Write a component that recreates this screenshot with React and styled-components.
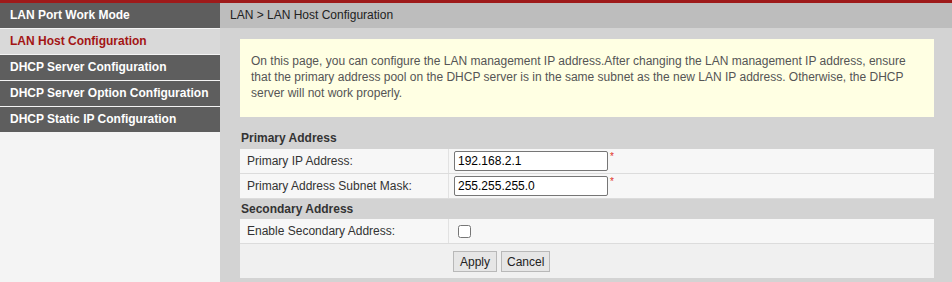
import React from "react";
import styled, { createGlobalStyle } from "styled-components";

const Global = createGlobalStyle`
  html, body { margin: 0; padding: 0; }
  body {
    font-family: "Liberation Sans", Arial, sans-serif;
    font-size: 12px;
    background: #f4f4f4;
  }
`;

const Page = styled.div`
  display: flex;
  flex-direction: column;
  width: 952px;
  height: 282px;
  overflow: hidden;
`;

const TopBar = styled.div`
  height: 3px;
  background: #9e1a1a;
`;

const Body = styled.div`
  flex: 1;
  display: grid;
  grid-template-columns: 220px 1fr;
`;

const Sidebar = styled.nav`
  background: #f4f4f4;
  display: flex;
  flex-direction: column;
`;

const NavItem = styled.div`
  height: 25px;
  line-height: 25px;
  padding-left: 10px;
  font-weight: bold;
  font-size: 12px;
  border-bottom: 1px solid #f4f4f4;
  background: ${(p) => (p.$active ? "#d9d9d9" : "#5e5e5e")};
  color: ${(p) => (p.$active ? "#a31515" : "#ffffff")};
`;

const Main = styled.main`
  background: #d3d3d3;
  display: flex;
  flex-direction: column;
`;

const Crumb = styled.div`
  height: 25px;
  line-height: 25px;
  padding-left: 10px;
  background: #bdbdbd;
  color: #222;
`;

const Content = styled.div`
  padding: 11px 18px 0 20px;
  display: flex;
  flex-direction: column;
`;

const Notice = styled.div`
  background: #ffffe3;
  color: #555;
  line-height: 16px;
  padding: 14px 10px 16px 11px;
`;

const SectionTitle = styled.div`
  font-weight: bold;
  color: #333;
  margin-top: ${(p) => p.$top || 0}px;
  height: ${(p) => p.$h || 21}px;
  line-height: ${(p) => p.$h || 21}px;
  padding-left: 1px;
`;

const Row = styled.div`
  display: grid;
  grid-template-columns: 209px 1fr;
  background: #f7f7f7;
  border-bottom: 1px solid #dcdcdc;
`;

const Label = styled.div`
  height: 24px;
  line-height: 24px;
  padding-left: 7px;
  color: #333;
  border-right: 1px solid #e2e2e2;
`;

const Value = styled.div`
  display: flex;
  align-items: center;
  padding-left: 5px;
`;

const TextInput = styled.input`
  width: 154px;
  height: 20px;
  box-sizing: border-box;
  border: 1px solid #767676;
  border-radius: 2px;
  padding: 0 3px;
  font-family: "Liberation Sans", Arial, sans-serif;
  font-size: 12px;
  color: #000;
  background: #fff;
  outline: none;
`;

const Required = styled.span`
  color: #e0301e;
  font-size: 10px;
  align-self: flex-start;
  margin-top: 2px;
  margin-left: 2px;
`;

const Check = styled.input`
  width: 13px;
  height: 13px;
  margin: 3px 3px 3px 4px;
`;

const ButtonRow = styled.div`
  display: flex;
  gap: 4px;
  background: #f0f0f0;
  height: 34px;
  box-sizing: border-box;
  padding: 7px 0 0 213px;
`;

const Button = styled.button`
  height: 21px;
  padding: 0 ${(p) => p.$pad || 6}px;
  font-family: "Liberation Sans", Arial, sans-serif;
  font-size: 12px;
  color: #222;
  background: #e6e6e6;
  border: 1px solid #b8b8b8;
  border-radius: 0;
`;

export default function App() {
  const items = [
    "LAN Port Work Mode",
    "LAN Host Configuration",
    "DHCP Server Configuration",
    "DHCP Server Option Configuration",
    "DHCP Static IP Configuration",
  ];
  return (
    <>
      <Global />
      <Page>
        <TopBar />
        <Body>
          <Sidebar>
            {items.map((t, i) => (
              <NavItem key={t} $active={i === 1}>
                {t}
              </NavItem>
            ))}
          </Sidebar>
          <Main>
            <Crumb>LAN &gt; LAN Host Configuration</Crumb>
            <Content>
              <Notice>
                On this page, you can configure the LAN management IP address.After changing the LAN
                management IP address, ensure that the primary address pool on the DHCP server is in the
                same subnet as the new LAN IP address. Otherwise, the DHCP server will not work properly.
              </Notice>
              <SectionTitle $top={10} $h={22}>Primary Address</SectionTitle>
              <Row>
                <Label>Primary IP Address:</Label>
                <Value>
                  <TextInput defaultValue="192.168.2.1" />
                  <Required>*</Required>
                </Value>
              </Row>
              <Row>
                <Label>Primary Address Subnet Mask:</Label>
                <Value>
                  <TextInput defaultValue="255.255.255.0" />
                  <Required>*</Required>
                </Value>
              </Row>
              <SectionTitle $h={20}>Secondary Address</SectionTitle>
              <Row>
                <Label>Enable Secondary Address:</Label>
                <Value>
                  <Check type="checkbox" />
                </Value>
              </Row>
              <ButtonRow>
                <Button>Apply</Button>
                <Button $pad={5}>Cancel</Button>
              </ButtonRow>
            </Content>
          </Main>
        </Body>
      </Page>
    </>
  );
}
